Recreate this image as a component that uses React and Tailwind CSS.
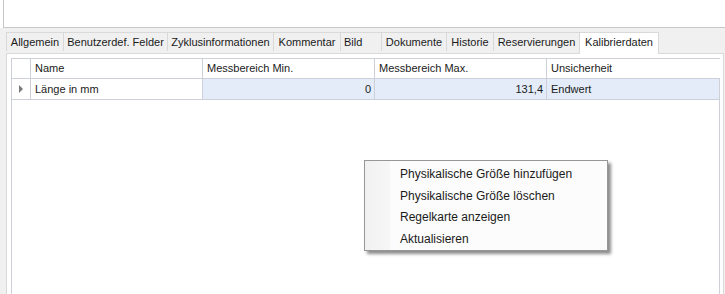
import React from "react";

const tabs = [
  { label: "Allgemein", w: 57 },
  { label: "Benutzerdef. Felder", w: 104 },
  { label: "Zyklusinformationen", w: 106 },
  { label: "Kommentar", w: 67 },
  { label: "Bild", w: 41, left: true },
  { label: "Dokumente", w: 65 },
  { label: "Historie", w: 47 },
  { label: "Reservierungen", w: 86 },
];

const cols = [
  { label: "Name", w: 172 },
  { label: "Messbereich Min.", w: 172 },
  { label: "Messbereich Max.", w: 172 },
  { label: "Unsicherheit", w: 173 },
];

const menu = [
  "Physikalische Größe hinzufügen",
  "Physikalische Größe löschen",
  "Regelkarte anzeigen",
  "Aktualisieren",
];

export default function App() {
  return (
    <div
      className="relative w-[725px] h-[294px] overflow-hidden bg-[#f0f0f0] text-[11px] text-[#1a1a1a]"
      style={{ fontFamily: '"Liberation Sans", Arial, sans-serif' }}
    >
      <div className="h-[28px] bg-white pl-[3px]">
        <div className="h-full border-l border-b border-[#c8c8c8] bg-white" />
      </div>

      {/* tab strip */}
      <div className="flex items-end h-[25px] pl-[6px]">
        <div className="flex">
          {tabs.map((t) => (
            <div
              key={t.label}
              style={{ width: t.w }}
              className={
                "h-[19px] flex items-center border-t border-l border-[#d9d9d9] bg-[#f0f0f0] whitespace-nowrap leading-none pt-[1px] " +
                (t.left ? "justify-start pl-[3px]" : "justify-center")
              }
            >
              {t.label}
            </div>
          ))}
          <div className="w-[80px] h-[22px] -mb-px flex items-center justify-center border-t border-l border-r border-[#d9d9d9] bg-white whitespace-nowrap leading-none relative z-10 pb-[2px]">
            Kalibrierdaten
          </div>
        </div>
      </div>

      {/* panel */}
      <div className="ml-[6px] mr-[1px] h-[260px] border border-[#d9d9d9] bg-white pt-[4px] pl-[4px] pr-[3px]">
        <div className="h-full border-l border-t border-r border-[#cdd0d8] bg-white">
          <div className="flex h-[20px] border-b border-[#cdd0d8]">
            <div className="w-[19px] shrink-0 border-r border-[#cdd0d8] bg-white" />
            {cols.map((c, i) => (
              <div
                key={c.label}
                style={{ width: c.w }}
                className={
                  "shrink-0 flex items-center px-[4px] whitespace-nowrap bg-white " +
                  (i < cols.length - 1 ? "border-r border-[#cdd0d8]" : "")
                }
              >
                {c.label}
              </div>
            ))}
          </div>
          <div className="flex h-[21px] border-b border-[#cdd0d8]">
            <div className="w-[19px] shrink-0 border-r border-[#cdd0d8] bg-white flex items-center justify-center">
              <svg width="5" height="8" viewBox="0 0 5 8">
                <path d="M0 0 L4 4 L0 8 Z" fill="#7a7a7a" />
              </svg>
            </div>
            <div className="w-[172px] shrink-0 flex items-center px-[4px] border-r border-[#cdd0d8] bg-white">
              Länge in mm
            </div>
            <div className="w-[172px] shrink-0 flex items-center justify-end px-[3px] border-r border-[#cdd0d8] bg-[#e3ecf8]">
              0
            </div>
            <div className="w-[172px] shrink-0 flex items-center justify-end px-[3px] border-r border-[#cdd0d8] bg-[#e3ecf8]">
              131,4
            </div>
            <div className="w-[172px] shrink-0 flex items-center px-[4px] bg-[#e3ecf8]">
              Endwert
            </div>
          </div>
        </div>
      </div>

      {/* context menu */}
      <div className="absolute left-[364px] top-[160px] w-[244px] h-[91px] border border-[#979797] bg-[#fcfcfc] shadow-[3px_3px_3px_rgba(0,0,0,0.45)] flex">
        <div className="w-[25px] shrink-0 bg-gradient-to-r from-[#f1f1f1] to-[#f7f7f7]" />
        <div className="flex flex-col pt-[2px] pl-[10px]">
          {menu.map((m) => (
            <div key={m} className="h-[22px] flex items-center whitespace-nowrap text-[12px]">
              {m}
            </div>
          ))}
        </div>
      </div>
    </div>
  );
}
